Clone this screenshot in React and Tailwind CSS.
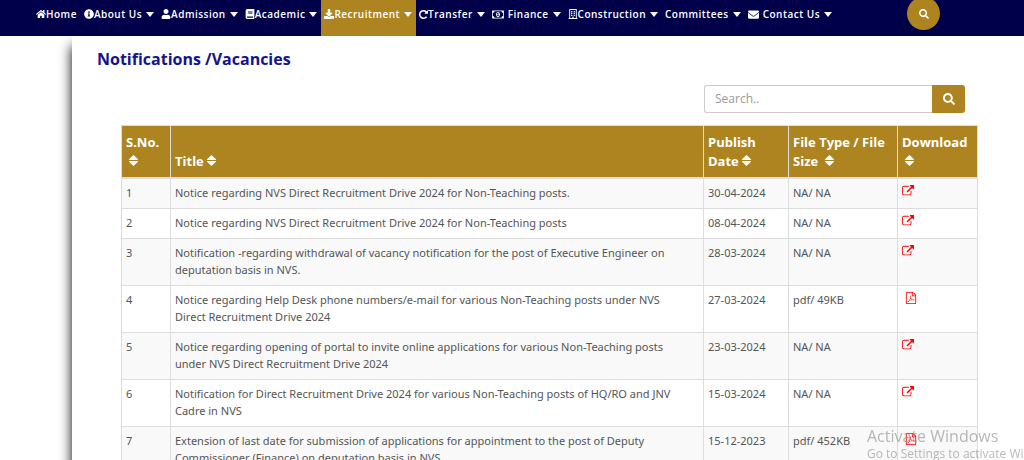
import React, { useState } from 'react';
import clsx from 'clsx';
import {
  FaBook,
  FaDownload,
  FaEnvelope,
  FaHome,
  FaInfoCircle,
  FaRegBuilding,
  FaSearch,
  FaUser,
} from 'react-icons/fa';

const MoneyIcon = ({ className }) => (
  <svg viewBox="0 0 1920 1792" className={className} width="12" height="11" fill="currentColor" aria-hidden="true">
    <path d="M768 1152h384v-96h-128v-448h-114l-148 137 77 80q42-37 55-57h2v288h-128v96zm512-256q0 70-21 142t-59.5 134-101.5 101-138 39-138-39-101.5-101-59.5-134-21-142 21-142 59.5-134 101.5-101 138-39 138 39 101.5 101 59.5 134 21 142zm512 256v-512q-106 0-181-75t-75-181h-1152q0 106-75 181t-181 75v512q106 0 181 75t75 181h1152q0-106 75-181t181-75zm128-832v1152q0 26-19 45t-45 19h-1792q-26 0-45-19t-19-45v-1152q0-26 19-45t45-19h1792q26 0 45 19t19 45z" />
  </svg>
);

const RepeatIcon = ({ className }) => (
  <svg viewBox="128 128 1536 1536" className={className} width="9" height="9" fill="currentColor" aria-hidden="true">
    <path d="M1664 256v448q0 26-19 45t-45 19h-448q-42 0-59-40-17-39 14-69l138-138q-148-137-349-137-104 0-198.5 40.5t-163.5 109.5-109.5 163.5-40.5 198.5 40.5 198.5 109.5 163.5 163.5 109.5 198.5 40.5q119 0 225-52t179-147q7-10 23-12 15 0 25 9l137 138q9 8 9.5 20.5t-7.5 22.5q-109 132-264 204.5t-327 72.5q-156 0-298-61t-245-164-164-245-61-298 61-298 164-245 245-164 298-61q147 0 284.5 55.5t244.5 156.5l130-129q29-31 70-14 39 17 39 59z" />
  </svg>
);

const ExternalLinkIcon = () => (
  <svg viewBox="0 0 1792 1792" className="size-3" fill="currentColor" aria-hidden="true">
    <path d="M1408 928v320q0 119-84.5 203.5t-203.5 84.5h-832q-119 0-203.5-84.5t-84.5-203.5v-832q0-119 84.5-203.5t203.5-84.5h704q14 0 23 9t9 23v64q0 14-9 23t-23 9h-704q-66 0-113 47t-47 113v832q0 66 47 113t113 47h832q66 0 113-47t47-113v-320q0-14 9-23t23-9h64q14 0 23 9t9 23zm384-864v512q0 26-19 45t-45 19-45-19l-176-176-652 652q-10 10-23 10t-23-10l-114-114q-10-10-10-23t10-23l652-652-176-176q-19-19-19-45t19-45 45-19h512q26 0 45 19t19 45z" />
  </svg>
);

const PdfIcon = () => (
  <svg viewBox="0 0 1792 1792" className="ml-[3px] size-3" fill="currentColor" aria-hidden="true">
    <path d="M1596 380q28 28 48 76t20 88v1152q0 40-28 68t-68 28h-1344q-40 0-68-28t-28-68v-1600q0-40 28-68t68-28h896q40 0 88 20t76 48zm-444-244v376h376q-10-29-22-41l-313-313q-12-12-41-22zm384 1528v-1024h-416q-40 0-68-28t-28-68v-416h-768v1536h1280zm-514-593q33 26 84 56 59-7 117-7 147 0 177 49 16 22 2 52 0 1-1 2l-2 2v1q-6 38-71 38-48 0-115-20t-130-53q-221 24-392 83-153 262-242 262-15 0-28-7l-24-12q-1-1-6-5-10-10-6-36 9-40 56-91.5t132-96.5q14-9 23 6 2 2 2 4 52-85 107-197 68-136 104-262-24-82-30.5-159.5t6.5-127.5q11-40 42-40h22q23 0 35 15 18 21 9 68-2 6-4 8 1 3 1 8v30q-2 123-14 192 55 164 146 238zm-576 411q52-24 137-158-51 40-87.5 84t-49.5 74zm398-920q-15 42-2 132 1-7 7-44 0-3 7-43 1-4 4-8-1-1-1-2-1-2-1-3-1-22-13-36 0 1-1 2v2zm-124 661q135-54 284-81-2-1-13-9.5t-16-13.5q-76-67-127-176-27 86-83 197-30 56-45 83zm646-16q-24-24-140-24 76 28 124 28 14 0 18-1 0-1-2-3z" />
  </svg>
);

const NAV_ITEMS = [
  { label: 'Home', icon: FaHome },
  { label: 'About Us', icon: FaInfoCircle, menu: true },
  { label: 'Admission', icon: FaUser, menu: true },
  { label: 'Academic', icon: FaBook, menu: true },
  { label: 'Recruitment', icon: FaDownload, menu: true, active: true },
  { label: 'Transfer', icon: RepeatIcon, menu: true },
  { label: 'Finance', icon: MoneyIcon, menu: true, spaced: true },
  { label: 'Construction', icon: FaRegBuilding, menu: true },
  { label: 'Committees', menu: true },
  { label: 'Contact Us', icon: FaEnvelope, menu: true, spaced: true },
];

const NOTICES = [
  { title: 'Notice regarding NVS Direct Recruitment Drive 2024 for Non-Teaching posts.', date: '30-04-2024', file: 'NA/ NA' },
  { title: 'Notice regarding NVS Direct Recruitment Drive 2024 for Non-Teaching posts', date: '08-04-2024', file: 'NA/ NA' },
  { title: 'Notification -regarding withdrawal of vacancy notification for the post of Executive Engineer on deputation basis in NVS.', date: '28-03-2024', file: 'NA/ NA' },
  { title: 'Notice regarding Help Desk phone numbers/e-mail for various Non-Teaching posts under NVS Direct Recruitment Drive 2024', date: '27-03-2024', file: 'pdf/ 49KB', pdf: true },
  { title: 'Notice regarding opening of portal to invite online applications for various Non-Teaching posts under NVS Direct Recruitment Drive 2024', date: '23-03-2024', file: 'NA/ NA' },
  { title: 'Notification for Direct Recruitment Drive 2024 for various Non-Teaching posts of HQ/RO and JNV Cadre in NVS', date: '15-03-2024', file: 'NA/ NA' },
  { title: 'Extension of last date for submission of applications for appointment to the post of Deputy Commissioner (Finance) on deputation basis in NVS', date: '15-12-2023', file: 'pdf/ 452KB', pdf: true },
];

const NavItem = ({ item }) => {
  const Icon = item.icon;
  return (
    <a
      href="#"
      className={clsx('flex h-9 items-center pr-1 pb-2 pl-[3px]', item.active && 'bg-[#ad841f]')}
    >
      {Icon && <Icon size={item.spaced ? 11 : 10} className={clsx('shrink-0', item.spaced && 'mr-1')} />}
      <span className="whitespace-nowrap">{item.label}</span>
      {item.menu && (
        <svg viewBox="0 0 8 5" className="ml-1 h-[5px] w-2 shrink-0" fill="currentColor" aria-hidden="true">
          <path d="M0 0h8L4 5z" />
        </svg>
      )}
    </a>
  );
};

const SortHeader = ({ label, className, indent }) => (
  <th className={clsx('border border-b-2 border-[#ddd] px-1 pt-[7px] pb-1.5 text-left align-bottom', className)}>
    {label}{' '}
    <button type="button" aria-label={`Sort by ${label}`} className={clsx('inline-block', indent && 'ml-[3px]')}>
      <svg viewBox="0 0 9 11" className="h-[11px] w-[9px]" fill="currentColor" aria-hidden="true">
        <path d="M4.5 0L9 4.2V5H0v-.8zM0 6h9v.8L4.5 11 0 6.8z" />
      </svg>
    </button>
  </th>
);

const App = () => {
  const [query, setQuery] = useState('');

  return (
    <div className="h-screen overflow-hidden bg-white font-['Open_Sans','Liberation_Sans',sans-serif] text-[#555]">
      {/* Top navigation */}
      <header className="flex h-9 items-start bg-[#00004a] pl-[33px] text-[10px] font-semibold tracking-wider text-white">
        <nav className="flex items-center">
          {NAV_ITEMS.map((item) => (
            <NavItem key={item.label} item={item} />
          ))}
        </nav>
        <button
          type="button"
          aria-label="Open search"
          className="-mt-[3px] mr-[84px] ml-auto flex size-[33px] shrink-0 items-center justify-center rounded-full bg-[#ad841f]"
        >
          <FaSearch size={10} />
        </button>
      </header>

      <main className="ml-[72px] min-h-screen pt-[11px] pr-[46px] pl-[49px] shadow-[0_10px_12px_#000]">
        <h1 className="-ml-6 text-base leading-6 font-bold text-[#14148c]">Notifications /Vacancies</h1>

        <form className="mt-[14px] mr-[13px] ml-auto flex h-7 w-[261px]" onSubmit={(e) => e.preventDefault()}>
          <input
            type="text"
            aria-label="Search notifications"
            placeholder="Search.."
            value={query}
            onChange={(e) => setQuery(e.target.value)}
            className="min-w-0 flex-1 rounded-l-[3px] border border-r-0 border-[#ccc] px-2.5 text-xs placeholder:text-[#999]"
          />
          <button
            type="submit"
            aria-label="Search"
            className="flex w-[33px] items-center justify-center rounded-r-[3px] bg-[#ad841f] text-white"
          >
            <FaSearch size={12} />
          </button>
        </form>

        <table className="mt-3 w-full table-fixed border-collapse text-xs leading-[17px]">
          <thead className="bg-[#ad841f] text-[13px] leading-[19px] font-semibold text-white">
            <tr>
              <SortHeader label="S.No." className="w-[49px]" indent />
              <SortHeader label="Title" />
              <SortHeader label="Publish Date" className="w-[85px]" />
              <SortHeader label="File Type / File Size" className="w-[109px]" indent />
              <SortHeader label="Download" className="w-20" indent />
            </tr>
          </thead>
          <tbody className="font-['Noto_Sans','Open_Sans',sans-serif] text-[11px]">
            {NOTICES.map((notice, i) => (
              <tr key={notice.title} className="align-top odd:bg-[#f9f9f9]">
                <td className="border border-[#ddd] px-1 pt-[5px] pb-[7px]">{i + 1}</td>
                <td className="border border-[#ddd] pt-[5px] pr-5 pb-[7px] pl-1">{notice.title}</td>
                <td className="border border-[#ddd] px-1 pt-[5px] pb-[7px]">{notice.date}</td>
                <td className="border border-[#ddd] px-1 pt-[5px] pb-[7px]">{notice.file}</td>
                <td className="border border-[#ddd] px-1 py-1.5 text-[#ff0000]">
                  <a href="#" aria-label={`Download ${notice.title}`} className="inline-block align-top">
                    {notice.pdf ? <PdfIcon /> : <ExternalLinkIcon />}
                  </a>
                </td>
              </tr>
            ))}
          </tbody>
        </table>
      </main>

      {/* System watermark */}
      <div className="pointer-events-none fixed right-0 -bottom-0.5 w-[157px] whitespace-nowrap text-[#888]/60">
        <p className="text-base leading-5">Activate Windows</p>
        <p className="text-xs leading-4">Go to Settings to activate Wi</p>
      </div>
    </div>
  );
};

export default App;
